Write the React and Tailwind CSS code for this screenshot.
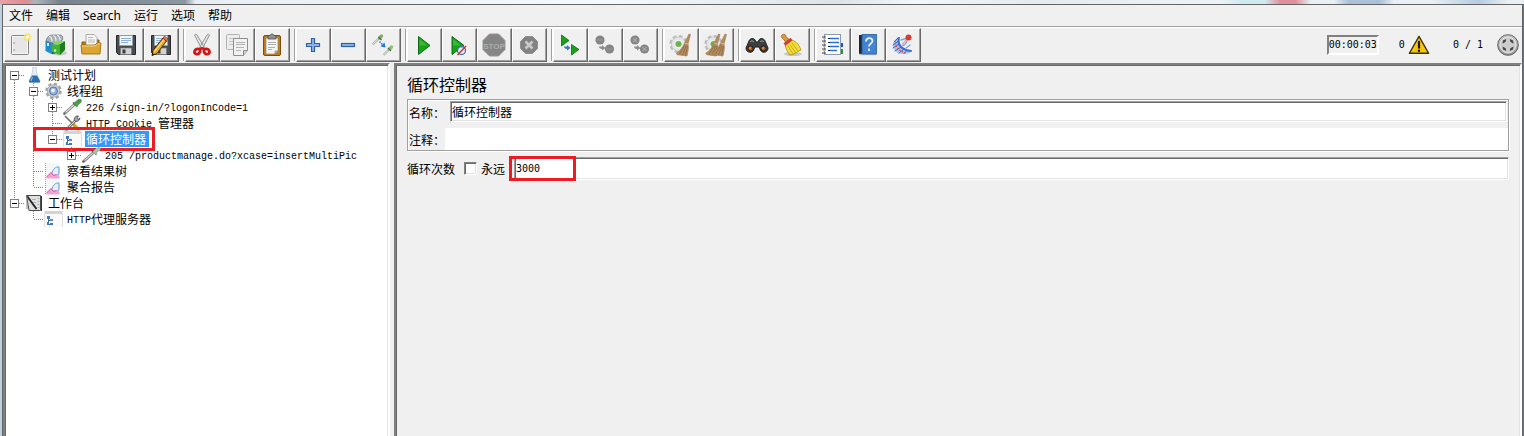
import React from "react";

const stroke = { fill: "none", strokeLinecap: "round", strokeLinejoin: "round" };

function Svg({ size = 24, children, className = "" }) {
  return (
    <svg viewBox="0 0 24 24" width={size} height={size} aria-hidden="true" className={"shrink-0 " + className}>
      {children}
    </svg>
  );
}

/* ---------- toolbar icons ---------- */

const NewIcon = () => (
  <Svg>
    <rect x="2.500" y="2.500" width="17" height="19" rx="1" fill="#e6e6e6" stroke="#858784" />
    <rect x="3.500" y="3.500" width="15" height="17" fill="none" stroke="#f8f8f8" />
    <circle cx="5" cy="10" r=".8" fill="#888" />
    <circle cx="5" cy="17" r=".8" fill="#888" />
    <circle cx="18.500" cy="4" r="3.800" fill="#f6e36a" opacity=".8" />
    <circle cx="18.500" cy="4" r="1.700" fill="#fffbd0" />
  </Svg>
);

const TemplatesIcon = () => (
  <Svg>
    <ellipse cx="15" cy="20" rx="8" ry="2.500" fill="#c9c9c9" />
    <path d="M1.500 8l6-1.500V21l-6-3z" fill="#1b8ccf" />
    <path d="M7.500 6.500l4 1v13l-4 .5z" fill="#0b5290" />
    <path d="M2 8c1-5 4-6 8-6h7c2 1 2 3 1.500 5L11 11z" fill="#a9b1b5" stroke="#6d767b" strokeWidth=".7" />
    <path d="M5 3.500c2 0 3 1 3 5M9 2.500c2 0 3 1 3 6M13 2.500c2 0 3 1 3 5" stroke="#eef2f3" strokeWidth="1.200" fill="none" />
    <path d="M8 12l8-1v11l-8-3z" fill="#3fb431" />
    <path d="M16 11l5-3v9l-5 5z" fill="#1f7d1c" />
    <path d="M8 12l4-4h9l-5 3z" fill="#7fda63" />
    <rect x="3" y="10" width="2" height="3" fill="#d6ebf7" />
    <circle cx="11" cy="17.500" r="1.300" fill="#c9f3be" />
  </Svg>
);

const OpenIcon = () => (
  <Svg>
    <path d="M3 9h5l2-2h10v13H3z" fill="#b07b12" stroke="#8a5c08" />
    <path d="M7 1.500h8l3 3V14H7z" fill="#f7f7f7" stroke="#9a9a9a" strokeWidth=".8" />
    <path d="M9 4.500h5M9 7h7M9 9h7" stroke="#b5b5b5" />
    <path d="M2 12h14l2-2h4l-1 11H3z" fill="#dca532" stroke="#a3720f" strokeWidth=".9" />
    <path d="M3 13h13.500l2-2H21" stroke="#f6d684" fill="none" />
  </Svg>
);

const Floppy = () => (
  <>
    <path d="M2.500 2.500h19v19H4.500l-2-2z" fill="#4a4d4f" stroke="#26282a" />
    <rect x="5.500" y="2.500" width="13" height="10" fill="#f0f5fa" stroke="#8fa5ba" strokeWidth=".6" />
    <path d="M7 5.500h10M7 7.500h10M7 9.500h7" stroke="#91b3da" />
    <rect x="6.500" y="15" width="11" height="6.500" fill="#d0d2d3" stroke="#777" strokeWidth=".6" />
    <rect x="8.500" y="16.500" width="3" height="4" fill="#3b3d3f" />
  </>
);

const SaveIcon = () => (
  <Svg>
    <Floppy />
  </Svg>
);

const SaveAsIcon = () => (
  <Svg>
    <Floppy />
    <path d="M3 22.500l1-5L14 5l3.500 3L8 20.500z" fill="#e8a923" stroke="#3a2604" strokeWidth="1" />
    <path d="M5.500 18.500L15 6.500" stroke="#fbe38a" strokeWidth="1.200" />
    <path d="M14 5l1.500-2 3.500 3-1.500 2z" fill="#e0746a" stroke="#7e1f17" strokeWidth=".6" />
    <path d="M3 22.500l.5-2.500 2 1.500z" fill="#111" />
  </Svg>
);

const CutIcon = () => (
  <Svg>
    <path d="M4.500 2c1-1 2-1 2.500 0l7.500 12.500-2.500 2zM19.500 2c-1-1-2-1-2.500 0L9.500 14.500l2.500 2z" fill="#e4e4e4" stroke="#8a8a8a" strokeWidth=".9" />
    <ellipse cx="7.300" cy="18.500" rx="3" ry="2.500" transform="rotate(-35 7.300 18.500)" fill="none" stroke="#d01616" strokeWidth="2.800" />
    <ellipse cx="16.700" cy="18.500" rx="3" ry="2.500" transform="rotate(35 16.700 18.500)" fill="none" stroke="#d01616" strokeWidth="2.800" />
    <path d="M9 16.500l3-1.500 3 1.500" stroke="#d01616" strokeWidth="2.400" fill="none" />
  </Svg>
);

const CopyIcon = () => (
  <Svg>
    <rect x="1.500" y="1.500" width="13" height="15" rx="1" fill="#ededed" stroke="#b3b3b3" />
    <path d="M4 5.500h8M4 8.500h4M4 11.500h4" stroke="#c4c4c4" />
    <path d="M8.500 5.500h14v12l-4 5h-10z" fill="#f1f1f1" stroke="#8e8e8e" />
    <path d="M11 9.500h9M11 11.500h9M11 14.500h8M11 17.500h5" stroke="#b4b4b4" />
    <path d="M18.500 22.500v-5h4" fill="#cfcfcf" stroke="#888" />
  </Svg>
);

const PasteIcon = () => (
  <Svg>
    <rect x="3.500" y="2.500" width="17" height="20" rx="1.500" fill="#bd7c19" stroke="#7c4e0b" />
    <path d="M6 5h12v13l-3 3H6z" fill="#f4f4f2" stroke="#8e8e8a" strokeWidth=".7" />
    <path d="M8 4.500c0-2 1-2 2-2 .5-2 3.500-2 4 0 1 0 2 0 2 2v1.500H8z" fill="#8d918c" stroke="#4f524e" strokeWidth=".8" />
    <path d="M8 9.500h8M8 11.500h8M8 14.500h7M8 16.500h4" stroke="#b0b0ae" />
    <path d="M15 21v-3h3z" fill="#c9c9c5" stroke="#777" strokeWidth=".6" />
  </Svg>
);

const PlusIcon = () => (
  <Svg>
    <path d="M10.500 5.500h3v5h5v3h-5v5h-3v-5h-5v-3h5z" fill="#8fb4e4" stroke="#2e62ad" strokeWidth="1.200" />
  </Svg>
);

const MinusIcon = () => (
  <Svg>
    <rect x="5.500" y="10.500" width="13" height="3" fill="#8fb4e4" stroke="#2e62ad" strokeWidth="1.200" />
  </Svg>
);

const ToggleIcon = () => (
  <Svg>
    <path d="M1.500 11.500l6-5.500" stroke="#a3aaa2" strokeWidth="2.200" />
    <path d="M1.500 11.500l6-5.500" stroke="#f1f3f1" strokeWidth=".9" />
    <path d="M8.500 5l2-2" stroke="#7fae6a" strokeWidth="3.400" {...stroke} />
    <path d="M7.500 4l3 3" stroke="#4f6b47" strokeWidth="1.200" />
    <path d="M12.500 22l5-5" stroke="#a3aaa2" strokeWidth="2.200" />
    <path d="M12.500 22l5-5" stroke="#f1f3f1" strokeWidth=".9" />
    <path d="M18.500 16l2-2" stroke="#8fc07a" strokeWidth="3.400" {...stroke} />
    <path d="M17 15l3 3" stroke="#4f6b47" strokeWidth="1.200" />
    <path d="M8.500 8.500l3 3" stroke="#2b7de0" strokeWidth="1.600" strokeDasharray="1.500 1" />
    <path d="M14.500 14.500l-5-1 4-4z" fill="#1f76e8" />
  </Svg>
);

const RunIcon = () => (
  <Svg>
    <path d="M6.500 3.500L18 12.500 6.500 21.500z" fill="#17a317" stroke="#0b6b12" />
    <path d="M7.500 6l8 6.500h-8z" fill="#5acb4e" opacity=".55" />
  </Svg>
);

const RunNoPauseIcon = () => (
  <Svg>
    <path d="M5 3.500l12 9-12 9z" fill="#17a317" stroke="#0b6b12" />
    <path d="M6 6l8 6.500H6z" fill="#5acb4e" opacity=".55" />
    <circle cx="14.500" cy="17.500" r="4" fill="#eef3fb" fillOpacity=".85" stroke="#3a6fb4" strokeWidth="1.300" />
    <path d="M10.500 22l8.500-9" stroke="#d0342c" strokeWidth="1.500" />
  </Svg>
);

const StopIcon = () => (
  <Svg>
    <path d="M7.500 1h9L23 7.500v9L16.500 23h-9L1 16.500v-9z" fill="#858585" stroke="#959595" />
    <text x="12" y="15.500" textAnchor="middle" fontFamily="Liberation Sans, sans-serif" fontWeight="700" fontSize="8" fill="#adadad">
      STOP
    </text>
  </Svg>
);

const ShutdownIcon = () => (
  <Svg>
    <path d="M8.500 3.500h7l5 5v7l-5 5h-7l-5-5v-7z" fill="#828282" stroke="#909090" />
    <path d="M8.500 8.500l7 7M15.500 8.500l-7 7" stroke="#c9c9c9" strokeWidth="2.600" />
  </Svg>
);

const Hop = ({ color = "#3c78c0" }) => <path d="M6 13.500h3v-1.500l3.500 3-3.500 2.500v-1.500c-2 0-3-1-3-2.500z" fill={color} />;

const RemoteStartIcon = () => (
  <Svg>
    <path d="M3.500 2l7.500 5.500L3.500 13z" fill="#1aa01a" stroke="#0b6b12" strokeWidth=".8" />
    <path d="M13.500 11.500l7.500 5-7.500 5.500z" fill="#1aa01a" stroke="#0b6b12" strokeWidth=".8" />
    <Hop />
  </Svg>
);

const RemoteStopIcon = () => (
  <Svg>
    <circle cx="7" cy="7" r="4.600" fill="#858585" />
    <path d="M4 7h6" stroke="#949494" strokeWidth="1.500" />
    <circle cx="16.500" cy="16" r="4.600" fill="#858585" />
    <path d="M13.500 16h6" stroke="#949494" strokeWidth="1.500" />
    <Hop color="#8d8d8d" />
  </Svg>
);

const RemoteShutdownIcon = () => (
  <Svg>
    <circle cx="7" cy="7" r="4.600" fill="#858585" />
    <path d="M5 5l4 4M9 5L5 9" stroke="#a6a6a6" strokeWidth="1.200" />
    <circle cx="16.500" cy="16" r="4.600" fill="#858585" />
    <path d="M14.500 14l4 4M18.500 14l-4 4" stroke="#a6a6a6" strokeWidth="1.200" />
    <Hop color="#8d8d8d" />
  </Svg>
);

const GearShape = () => (
  <>
    <circle cx="9.500" cy="11" r="7.600" fill="none" stroke="#bdbdbd" strokeWidth="3" strokeDasharray="3.800 2.160" />
    <circle cx="9.500" cy="11" r="7" fill="#e6e6e6" stroke="#c4c4c4" strokeWidth=".8" />
    <circle cx="9.500" cy="11" r="4" fill="#f6f6f6" />
    <circle cx="9.500" cy="11" r="2.800" fill="#61b83c" stroke="#7d9c70" strokeWidth=".6" />
  </>
);

const Broom = ({ x }) => (
  <g transform={`translate(${x} 1)`}>
    <path d="M0 0l1.500.5L-1 10c1 3 0 8-1 12l-8-1c-2 0-3-1-2.500-2C-9 17-6 13-4.500 9z" fill="#b28c60" stroke="#a07c50" strokeWidth=".6" />
    <path d="M-4 11l-5.500 9M-3 12l-3.500 9M-1.500 12l-2 9.500" stroke="#8a6538" strokeWidth=".7" fill="none" />
    <path d="M-4.500 9l3.500 1" stroke="#dcc09a" strokeWidth=".8" />
  </g>
);

const ClearIcon = () => (
  <Svg>
    <GearShape />
    <Broom x={20} />
  </Svg>
);

const ClearAllIcon = () => (
  <Svg>
    <GearShape />
    <Broom x={14.5} />
    <Broom x={21} />
  </Svg>
);

const SearchIcon = () => (
  <Svg>
    <path d="M4 8c1-3 5-3 6-1l1 2h2l1-2c1-2 5-2 6 1l3 7c0 5-7 6-8 1l-1-2h-4l-1 2c-1 5-8 4-8-1z" fill="#3c3f40" stroke="#1f2121" />
    <path d="M5 9c1-1.500 3-1.500 4 0M15 9c1-1.500 3-1.500 4 0" stroke="#9da3a3" fill="none" />
    <circle cx="5.500" cy="15.500" r="2.600" fill="#b05a22" stroke="#1b1b1b" />
    <circle cx="18.500" cy="15.500" r="2.600" fill="#b05a22" stroke="#1b1b1b" />
    <circle cx="5" cy="15" r="1" fill="#e89a5a" />
    <circle cx="18" cy="15" r="1" fill="#e89a5a" />
  </Svg>
);

const SearchResetIcon = () => (
  <Svg>
    <ellipse cx="13" cy="21" rx="9" ry="2" fill="#c6c6c6" />
    <path d="M2 2c2-1.500 4-.5 4 1.500l3 3-3 3-3-4C1 4.500 1 3 2 2z" fill="#d69a45" stroke="#96611a" strokeWidth=".8" />
    <path d="M5 12l7-5c5 2 7 5 9 10-3 1-5 4-11 5-2-3-4-5-5-10z" fill="#f3dc38" stroke="#a8900f" strokeWidth=".8" />
    <path d="M8 13l5 8M10 12l6 8M12 10l6 8" stroke="#c2a615" fill="none" strokeWidth=".9" />
    <path d="M4.500 11.500l7-5.500" stroke="#d63a2b" strokeWidth="3" />
  </Svg>
);

const FunctionHelperIcon = () => (
  <Svg>
    <path d="M19 10h3v4h-3z" fill="#1d55c9" />
    <path d="M19 16h3v5h-3z" fill="#279a2c" />
    <rect x="3.500" y="1.500" width="16" height="20" fill="#fff" stroke="#8d9aa8" />
    <path d="M7 5.500h3M7 9.500h3M7 13.500h3M7 17.500h3" stroke="#123" strokeWidth="1" />
    <path d="M9 5.500h9M9 9.500h9M9 13.500h9M9 17.500h7" stroke="#2a6fd8" strokeWidth="1.400" />
    <path d="M1 4h4M1 8h4M1 12h4M1 16h4M1 20h4" stroke="#444" strokeWidth="1.200" />
    <path d="M2 5.500h3M2 9.500h3M2 13.500h3M2 17.500h3" stroke="#bbb" />
  </Svg>
);

const HelpIcon = () => (
  <Svg>
    <path d="M3 2h4v20H4l-1-2z" fill="#1d2733" />
    <path d="M4 21.500h16" stroke="#b8c4cf" strokeWidth="1.500" />
    <rect x="6" y="1.500" width="14.500" height="19.500" fill="#4284cf" stroke="#2a5d9e" strokeWidth=".8" />
    <path d="M10 8.500c0-4.500 6.500-4.500 6.500-.5 0 2.500-3.500 2.500-3.500 5.500M13 15.500v2.500" stroke="#e6f0fb" strokeWidth="1.800" fill="none" />
  </Svg>
);

const ShuttleIcon = () => (
  <Svg>
    <path d="M7 4c-5 4-6 9-4 12 2 5 9 6 16 4l1-3c-6 0-9-3-11-7z" fill="#a9c4ee" />
    <path d="M8 5c-2 6 2 12 12 13" stroke="#3a70cc" strokeWidth="2" {...stroke} />
    <path d="M7 5L3 9M7.500 8L2 12M8 11l-6 4M10 14l-6 4M13 16l-5 4M16 17.500l-3 3" stroke="#3467c2" strokeWidth="1" {...stroke} />
    <path d="M4.500 7c-1 6 3 11 10 13" stroke="#e0444b" strokeWidth="1.200" strokeDasharray="1.500 1.300" fill="none" />
    <path d="M10 7l5-1.500M12 12.500c2-.5 3-2 4-4.500M15 15l4-3" stroke="#7fa4e2" strokeWidth="1.400" {...stroke} />
    <path d="M11 11.500l5-5.500" stroke="#e8aaa4" strokeWidth="1.400" />
    <circle cx="17.500" cy="4.500" r="3" fill="#da3b30" />
  </Svg>
);

const WarningIcon = () => (
  <Svg size={22}>
    <path d="M12 2.500L22.500 21h-21z" fill="#f7c60c" stroke="#3c3108" strokeWidth="1.500" strokeLinejoin="round" />
    <path d="M12 8.500v6.500" stroke="#1d1805" strokeWidth="2.400" {...stroke} />
    <circle cx="12" cy="18.300" r="1.300" fill="#1d1805" />
  </Svg>
);

const ConnectionIcon = () => (
  <Svg size={22}>
    <defs>
      <linearGradient id="ring" x1="0" y1="0" x2="0" y2="1">
        <stop offset="0" stopColor="#c4c4c4" />
        <stop offset="1" stopColor="#8f8f8f" />
      </linearGradient>
    </defs>
    <circle cx="12" cy="12" r="11.300" fill="url(#ring)" stroke="#5c5c5c" />
    <circle cx="12" cy="12" r="8.800" fill="#cdcdcd" stroke="#e6e6e6" />
    <g fill="#444">
      <path d="M6 10.500l.5-3.500 3.500-1.500-.5 3z" />
      <path d="M18 10.500l-.5-3.500-3.500-1.500.5 3z" />
      <path d="M6 13.500l.5 3.500 3.500 1.500-.5-3z" />
      <path d="M18 13.500l-.5 3.500-3.500 1.500.5-3z" />
    </g>
  </Svg>
);

/* ---------- tree icons (19 x 16) ---------- */

function TreeSvg({ children }) {
  return (
    <svg viewBox="0 0 19 16" width="19" height="16" aria-hidden="true" className="shrink-0">
      {children}
    </svg>
  );
}

const FlaskIcon = () => (
  <TreeSvg>
    <path d="M7.500.5h4v5l3.500 8c0 1-.5 2-1.500 2h-8c-1 0-1.500-1-1.500-2l3.500-8z" fill="#e3eef6" stroke="#c3ced6" strokeWidth=".7" />
    <path d="M7 8.500h5l3 5.500c0 1 0 1.500-1 1.500H5c-1 0-1-.5-1-1.500z" fill="#2c6fb5" />
    <path d="M7.500 10l-1.500 4" stroke="#9cc6ee" />
  </TreeSvg>
);

const GearIcon = () => (
  <TreeSvg>
    <circle cx="9.500" cy="8" r="7" fill="none" stroke="#a2a6ab" strokeWidth="2.600" strokeDasharray="3.200 2.300" />
    <circle cx="9.500" cy="8" r="6.200" fill="#cdd1d5" stroke="#999ea4" strokeWidth=".8" />
    <circle cx="9.500" cy="8" r="4" fill="#8fb0dc" stroke="#5b769c" />
    <circle cx="9" cy="7.500" r="1.900" fill="#eef4fc" />
  </TreeSvg>
);

const PipetteIcon = () => (
  <TreeSvg>
    <path d="M1.500 14.500L11 6" stroke="#70766f" strokeWidth="2.800" {...stroke} />
    <path d="M2.500 13.500L11 6" stroke="#dfe4de" strokeWidth="1.200" />
    <path d="M10 3.500l4.500 4" stroke="#2e5b2b" strokeWidth="1.600" />
    <path d="M13 5l3.500-3" stroke="#4c9a45" strokeWidth="4.400" {...stroke} />
  </TreeSvg>
);

const PipetteGreyIcon = () => (
  <TreeSvg>
    <path d="M1.500 14.500L11 6" stroke="#6f6f6f" strokeWidth="2.800" {...stroke} />
    <path d="M2.500 13.500L11 6" stroke="#d8d8d8" strokeWidth="1.200" />
    <path d="M10 3.500l4.500 4" stroke="#444" strokeWidth="1.600" />
    <path d="M13 5l3.500-3" stroke="#a9bfa5" strokeWidth="3.800" {...stroke} />
  </TreeSvg>
);

const ToolsIcon = () => (
  <TreeSvg>
    <path d="M2 1l11 11" stroke="#676767" strokeWidth="1.500" />
    <path d="M11 10l4 4" stroke="#d7a31d" strokeWidth="3.200" {...stroke} />
    <path d="M3.500 14.500L12 6" stroke="#767676" strokeWidth="2.800" {...stroke} />
    <path d="M4 14L12 6" stroke="#dedede" strokeWidth="1" />
    <path d="M15.500 1c-3-.5-5 2-4 4.500 2 2 5 .5 5.500-2.500l-2 1.500-1-1.500z" fill="#a8a8a8" stroke="#3f3f3f" strokeWidth=".8" />
  </TreeSvg>
);

const ControllerIcon = () => (
  <TreeSvg>
    <rect x=".5" y="0" width="18" height="16" fill="#fafafa" />
    <rect x=".5" y="0" width="18" height="3" fill="#d4d4d4" />
    <path d="M.5 3v13M18.500 3v13" stroke="#dedede" />
    <path d="M4.500 6v7M4.500 9.500h3M4.500 13.500h3" stroke="#3b66a0" fill="none" />
    <rect x="3" y="5" width="3" height="3" fill="#3d78bd" />
    <rect x="6" y="8" width="3" height="2" fill="#4f8bcd" />
    <rect x="6" y="12" width="3" height="2" fill="#3d78bd" />
    <rect x="3" y="11" width="2" height="3" fill="#3d78bd" />
  </TreeSvg>
);

const GraphIcon = () => (
  <TreeSvg>
    <rect x="1.500" y="0" width="14" height="15.500" fill="#f4f6f8" />
    <path d="M1.500 0v15.500" stroke="#9a9fa6" strokeDasharray="1 1" />
    <path d="M7.500 11c1.500-5 4-7.500 7.500-7v7c-2 2-5 2-7.500 0z" fill="#e3eefa" stroke="#5a8fcb" strokeWidth=".9" />
    <path d="M2.500 15.500V14L7 9.500l2.500 3 3-1 3 1v3z" fill="#f2a2d4" />
    <path d="M2.500 14L7 9.500l2.500 3 3-1" stroke="#e0449f" strokeWidth=".9" fill="none" />
  </TreeSvg>
);

const WorkbenchIcon = () => (
  <TreeSvg>
    <path d="M1.500.5h14v15H4z" fill="#dfe1e3" stroke="#4c4c4c" />
    <path d="M12.500 3.500h2M12.500 6.500h2M12.500 9.500h2M12.500 12.500h2M7 4.500h4M8 7.500h3" stroke="#a9b0b6" />
    <path d="M16.500 1v15" stroke="#333" />
    <path d="M2 1l9.500 13" stroke="#262626" strokeWidth="2" />
    <path d="M2 1v13" stroke="#888" />
  </TreeSvg>
);

/* ---------- tree guides ---------- */

const dotted = { stroke: "#808080", strokeWidth: 1, strokeDasharray: "1 1", fill: "none" };

function Guide({ kind }) {
  return (
    <svg viewBox="0 0 19 16" width="19" height="16" aria-hidden="true" className="shrink-0">
      {(kind === "line" || kind === "tee") && <path d="M8.500 0v16" {...dotted} />}
      {kind === "end" && <path d="M8.500 0v8" {...dotted} />}
      {(kind === "tee" || kind === "end") && <path d="M9 8.500h10" {...dotted} />}
    </svg>
  );
}

function Expander({ open, above, below, label }) {
  return (
    <button type="button" aria-expanded={open} aria-label={label} className="h-4 w-[19px] shrink-0">
      <svg viewBox="0 0 19 16" width="19" height="16" aria-hidden="true" className="block">
        {above && <path d="M8.500 0v4" {...dotted} />}
        {below && <path d="M8.500 13v3" {...dotted} />}
        <path d="M13 8.500h6" {...dotted} />
        <rect x="4.500" y="4.500" width="8" height="8" fill="#fff" stroke="#808080" />
        <path d="M6 8.500h5" stroke="#000" />
        {!open && <path d="M8.500 6v5" stroke="#000" />}
      </svg>
    </button>
  );
}

const rows = [
  { cells: ["open"], first: true, Icon: FlaskIcon, zh: "测试计划" },
  { cells: ["line", "open"], Icon: GearIcon, more: true, zh: "线程组" },
  { cells: ["line", "line", "closed"], Icon: PipetteIcon, more: true, en: "226 /sign-in/?logonInCode=1" },
  { cells: ["line", "line", "tee"], Icon: ToolsIcon, en: "HTTP Cookie ", zh: "管理器" },
  { cells: ["line", "line", "open"], Icon: ControllerIcon, zh: "循环控制器", selected: true },
  { cells: ["line", "line", "none", "closed"], Icon: PipetteGreyIcon, en: "205 /productmanage.do?xcase=insertMultiPic" },
  { cells: ["line", "tee"], Icon: GraphIcon, zh: "察看结果树" },
  { cells: ["line", "end"], Icon: GraphIcon, zh: "聚合报告" },
  { cells: ["open"], Icon: WorkbenchIcon, zh: "工作台" },
  { cells: ["none", "end"], Icon: ControllerIcon, en: "HTTP", zh: "代理服务器" },
];

function TreeRow({ row }) {
  const { Icon, selected } = row;
  const name = (row.en || "") + (row.zh || "");
  return (
    <li role="treeitem" aria-level={row.cells.length} aria-selected={!!selected} className="relative flex h-4 items-center whitespace-nowrap">
      {row.cells.map((cell, i) =>
        cell === "open" || cell === "closed" ? (
          <Expander key={i} open={cell === "open"} above={!row.first} below={row.first || row.more} label={name} />
        ) : (
          <Guide key={i} kind={cell} />
        ),
      )}
      <Icon />
      <span className={"ml-[3px] h-4 px-px whitespace-pre " + (selected ? "bg-[#3399ff] pr-[3px] text-white" : "")}>
        {row.en && <span className="align-[1px] font-['Liberation_Mono',monospace] text-[10px] leading-none">{row.en}</span>}
        {row.zh}
      </span>
      {selected && <span className="pointer-events-none absolute -top-1 left-[27px] h-6 w-[122px] border-3 border-[#ed1c24]" />}
    </li>
  );
}

/* ---------- toolbar ---------- */

const groups = [
  [["新建", NewIcon], ["模板", TemplatesIcon], ["打开", OpenIcon], ["保存", SaveIcon], ["另存为", SaveAsIcon]],
  [["剪切", CutIcon], ["复制", CopyIcon], ["粘贴", PasteIcon]],
  [["全部展开", PlusIcon], ["全部折叠", MinusIcon], ["切换", ToggleIcon]],
  [["启动", RunIcon], ["不停顿启动", RunNoPauseIcon], ["停止", StopIcon, true], ["关闭", ShutdownIcon, true]],
  [["远程全部启动", RemoteStartIcon], ["远程全部停止", RemoteStopIcon, true], ["远程全部关闭", RemoteShutdownIcon, true]],
  [["清除", ClearIcon], ["清除全部", ClearAllIcon]],
  [["查找", SearchIcon], ["重置查找", SearchResetIcon]],
  [["函数助手", FunctionHelperIcon], ["帮助", HelpIcon], ["Shuttle", ShuttleIcon]],
];

function ToolButton({ label, Icon, disabled }) {
  return (
    <button
      type="button"
      aria-label={label}
      disabled={disabled}
      className="flex h-[34px] w-[35px] items-center justify-center border border-t-white border-r-[#696969] border-b-[#696969] border-l-white pr-px shadow-[inset_-1px_-1px_0_#a0a0a0]"
    >
      <Icon />
    </button>
  );
}

const field =
  "min-w-0 flex-1 rounded-none border border-t-[#a0a0a0] border-r-white border-b-white border-l-[#a0a0a0] bg-white shadow-[inset_1px_1px_0_#696969,inset_-1px_-1px_0_#e3e3e3] outline-none";

export default function App() {
  return (
    <div className="flex min-h-screen flex-col bg-[#f0f0f0] font-['Noto_Sans_CJK_SC',sans-serif] text-[12px] leading-4 text-black">
      <div className="h-1 bg-[linear-gradient(90deg,#e9a0a6_0,#e08c94_26px,#a9b4bd_36px,#77828c_60px,#8b98a3_185px,#e8eef2_196px,#f6f9fb_40%,#dfe3e6_55%,#f4f7f9_60%,#e6eaed_68%,#eef3f6_80%,#cfeaf0_81.500%,#cfeaf0_83%,#df8f9b_84%,#df8f9b_85%,#e8f0f4_86%,#e8f0f4_87.500%,#a9c0d6_88.500%,#a9c0d6_90.500%,#e8f0f4_91.500%,#e8f0f4_94%,#b4cbe0_97%,#e8f0f4_99%)]" />
      <div className="flex flex-1 border-l-2 border-[#bcd0e0]">
        <div className="flex min-w-0 flex-1 flex-col border-t border-r border-l border-[#646464]">
          <nav className="flex h-[22px] items-center gap-[13px] border-b border-[#a0a0a0] pl-1.5 font-['Noto_Sans','Noto_Sans_CJK_SC',sans-serif]">
            {["文件", "编辑", "Search", "运行", "选项", "帮助"].map((item) => (
              <button key={item} type="button">
                {item}
              </button>
            ))}
          </nav>

          <div className="flex h-9 items-start border-t border-white pl-px">
            <div className="flex gap-1">
              {groups.map((group, i) => (
                <React.Fragment key={i}>
                  {i > 0 && <span className="-mr-1 my-px w-0.5 border-r border-l border-r-white border-l-[#a0a0a0]" />}
                  <div className="flex">
                    {group.map(([label, Icon, disabled]) => (
                      <ToolButton key={label} label={label} Icon={Icon} disabled={disabled} />
                    ))}
                  </div>
                </React.Fragment>
              ))}
            </div>
            <div className="ml-auto flex h-[34px] items-center pr-[3px] font-['DejaVu_Sans_Mono',monospace] text-[10px]">
              <output className="border-2 border-t-[#808080] border-r-white border-b-white border-l-[#808080]">00:00:03</output>
              <span className="ml-5">0</span>
              <span className="ml-[3px]">
                <WarningIcon />
              </span>
              <span className="ml-[23px]">0 / 1</span>
              <span className="ml-[14px]">
                <ConnectionIcon />
              </span>
            </div>
          </div>

          <main className="flex flex-1">
            <ul
              role="tree"
              className="w-[387px] shrink-0 border-2 border-b-0 border-t-[#808080] border-r-white border-l-[#808080] bg-white pt-0.5 pl-px shadow-[inset_1px_1px_0_#696969,inset_-1px_0_0_#e3e3e3]"
            >
              {rows.map((row, i) => (
                <TreeRow key={i} row={row} />
              ))}
            </ul>
            <div className="w-1 shrink-0" />
            <section className="min-w-0 flex-1 border-2 border-b-0 border-t-[#808080] border-r-white border-l-[#808080] pt-[9px] pr-[11px] pl-[11px] shadow-[inset_1px_1px_0_#696969,inset_-1px_0_0_#e3e3e3]">
              <h1 className="text-[16px] leading-5">循环控制器</h1>
              <div className="mt-[5px] flex flex-col gap-1.5 border border-[#a0a0a0] shadow-[1px_1px_0_#fff,inset_1px_1px_0_#fff]">
                <div className="flex pt-px pr-px">
                  <label htmlFor="name" className="w-[42px] pt-1 pl-px">
                    名称：
                  </label>
                  <input id="name" defaultValue="循环控制器" className={field + " h-[21px] pl-px"} />
                </div>
                <div className="flex">
                  <label htmlFor="comment" className="w-[37px] pt-1 pl-px">
                    注释：
                  </label>
                  <input id="comment" defaultValue="" className="h-[22px] min-w-0 flex-1 bg-white px-0.5 outline-none" />
                </div>
              </div>
              <div className="mt-1.5 flex items-center">
                <span>循环次数</span>
                <input
                  id="forever"
                  type="checkbox"
                  className="ml-[9px] size-[13px] shrink-0 appearance-none border border-t-[#808080] border-r-white border-b-white border-l-[#808080] bg-white shadow-[inset_1px_1px_0_#696969,inset_-1px_-1px_0_#e3e3e3]"
                />
                <label htmlFor="forever" className="ml-1">
                  永远
                </label>
                <div className="relative ml-[9px] flex flex-1">
                  <input
                    aria-label="循环次数"
                    defaultValue="3000"
                    className={field + " h-[23px] pl-px font-['DejaVu_Sans_Mono',monospace] text-[10px]"}
                  />
                  <span className="pointer-events-none absolute -top-px -left-[5px] h-[25px] w-[67px] border-3 border-[#ed1c24]" />
                </div>
              </div>
            </section>
          </main>
        </div>
        <div className="w-px bg-[#5d7688]" />
      </div>
    </div>
  );
}
